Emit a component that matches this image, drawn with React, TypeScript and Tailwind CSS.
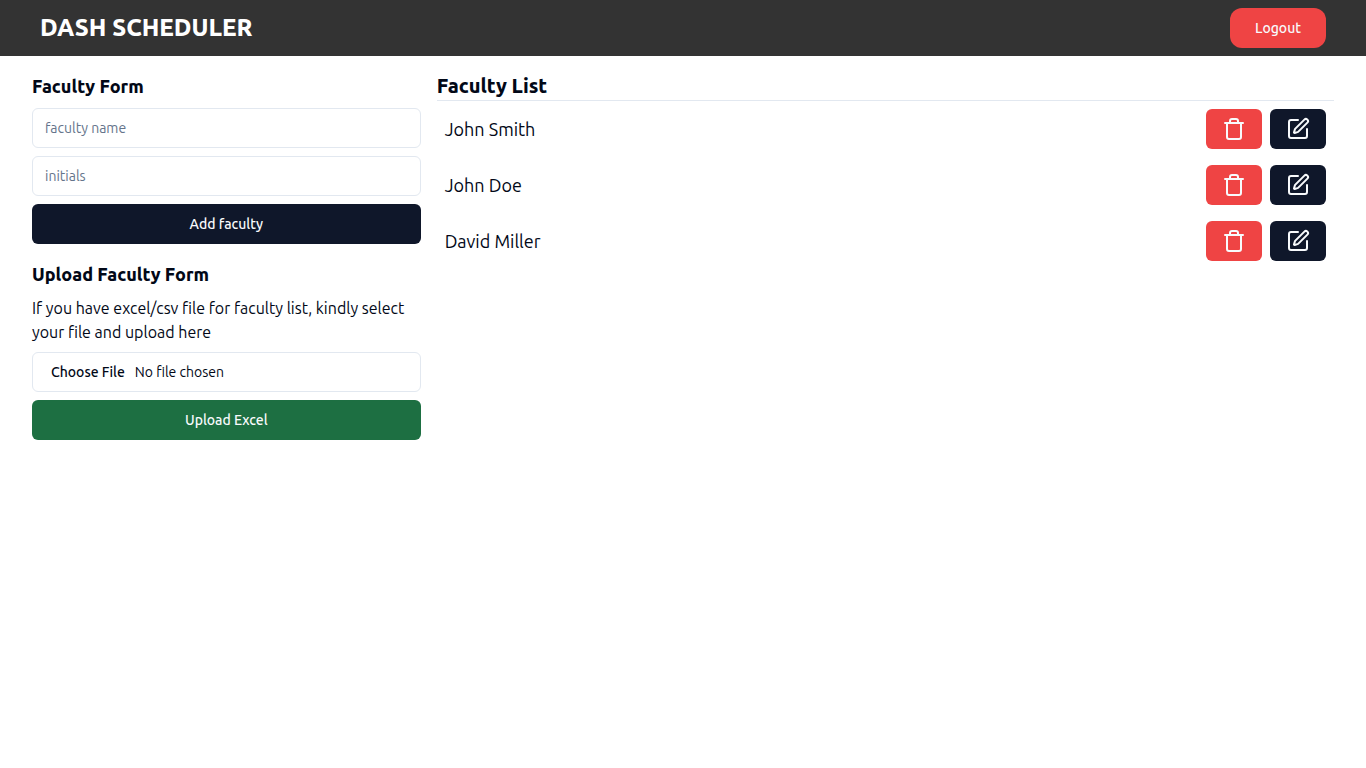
import React from "react";
import { Trash, Edit } from "lucide-react";

const faculty = ["John Smith", "John Doe", "David Miller"];

const field =
  "h-10 w-full rounded-md border border-[#e2e8f0] bg-white px-3 py-2 text-sm placeholder:text-[#64748b]";
const button =
  "flex h-10 items-center justify-center rounded-md px-4 text-sm font-medium text-[#f8fafc]";

export default function App() {
  return (
    <div className="min-h-screen bg-white font-[Ubuntu,'Noto_Sans',sans-serif] text-[#020817]">
      <header className="flex h-14 items-center justify-between bg-[#333333] px-10">
        <h1 className="text-2xl font-extrabold text-white">DASH SCHEDULER</h1>
        <button type="button" className="h-10 w-24 rounded-xl bg-[#ef4444] text-sm font-medium text-[#f8fafc]">
          Logout
        </button>
      </header>
      <main className="flex gap-4 px-8 pt-4">
        <div className="w-[29.85%] shrink-0">
          <form className="flex flex-col gap-2" onSubmit={(e) => e.preventDefault()}>
            <h2 className="text-lg font-extrabold">Faculty Form</h2>
            <input className={field} placeholder="faculty name" aria-label="Faculty name" />
            <input className={field} placeholder="initials" aria-label="Initials" />
            <button type="submit" className={`${button} bg-[#0f172a]`}>Add faculty</button>
          </form>
          <form className="mt-4 flex flex-col gap-2" onSubmit={(e) => e.preventDefault()}>
            <h2 className="text-lg font-extrabold">Upload Faculty Form</h2>
            <p>If you have excel/csv file for faculty list, kindly select your file and upload here</p>
            <input type="file" aria-label="Faculty file" className={`${field} file:border-0 file:bg-transparent file:px-1.5 file:py-px file:text-sm file:font-medium`} />
            <button type="submit" className={`${button} bg-[#1d6f42]`}>Upload Excel</button>
          </form>
        </div>
        <section className="grow">
          <h2 className="border-b border-[#e2e8f0] text-xl font-extrabold">Faculty List</h2>
          <ul>
            {faculty.map((name) => (
              <li key={name} className="flex items-center justify-between p-2 text-lg">
                <span>{name}</span>
                <div className="flex gap-2">
                  <button type="button" aria-label={`Delete ${name}`} className={`${button} bg-[#ef4444]`}>
                    <Trash size={24} />
                  </button>
                  <button type="button" aria-label={`Edit ${name}`} className={`${button} bg-[#0f172a]`}>
                    <Edit size={24} />
                  </button>
                </div>
              </li>
            ))}
          </ul>
        </section>
      </main>
    </div>
  );
}
